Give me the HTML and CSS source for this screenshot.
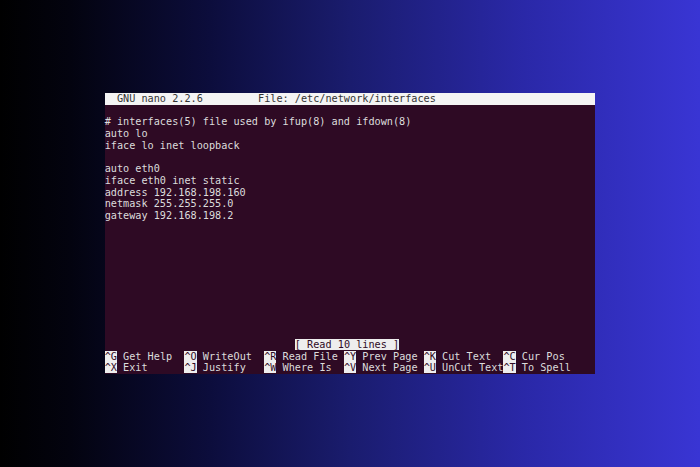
FILE: index.html
```html
<!DOCTYPE html>
<html lang="en">
<head>
  <meta charset="UTF-8" />
  <title>nano /etc/network/interfaces</title>
  <link rel="stylesheet" href="styles.css">
</head>
<body>

  <!-- nano editor, 80x24 terminal -->
  <div class="term">
    <div class="row title">  GNU nano 2.2.6         File: /etc/network/interfaces</div>
    <div class="row"> </div>
    <div class="row"># interfaces(5) file used by ifup(8) and ifdown(8)</div>
    <div class="row">auto lo</div>
    <div class="row">iface lo inet loopback</div>
    <div class="row"> </div>
    <div class="row">auto eth0</div>
    <div class="row">iface eth0 inet static</div>
    <div class="row">address 192.168.198.160</div>
    <div class="row">netmask 255.255.255.0</div>
    <div class="row">gateway 192.168.198.2</div>
    <div class="spacer"></div>
    <div class="row">                               <span class="rev">[ Read 10 lines ]</span></div>
    <div class="row"><span class="rev">^G</span> Get Help  <span class="rev">^O</span> WriteOut  <span class="rev">^R</span> Read File <span class="rev">^Y</span> Prev Page <span class="rev">^K</span> Cut Text  <span class="rev">^C</span> Cur Pos</div>
    <div class="row"><span class="rev">^X</span> Exit      <span class="rev">^J</span> Justify   <span class="rev">^W</span> Where Is  <span class="rev">^V</span> Next Page <span class="rev">^U</span> UnCut Text<span class="rev">^T</span> To Spell</div>
  </div>

</body>
</html>
```

FILE: styles.css
```css
html, body {
  height: 100%;
}
body {
  margin: 0;
  display: flex;
  align-items: center;
  justify-content: center;
  background: linear-gradient(90deg, #000 0%, #03030f 10%, #0c0d3c 30%, #1a1c6e 50%, #2a28a8 75%, #3935d4 100%);
}

/* Terminal */
.term {
  width: 80ch;
  height: 280.8px;
  display: flex;
  flex-direction: column;
  background-color: #2e0a24;
  color: #dcdcdc;
  font-family: 'DejaVu Sans Mono', monospace;
  font-size: 10.2px;
  line-height: 11.7px;
}
.row {
  white-space: pre;
  height: 11.7px;
}
.spacer {
  flex: 1;
}
.title {
  background-color: #f4f4f4;
  color: #333;
}
.rev {
  background-color: #eeeeee;
  color: #2e0a24;
}
```
